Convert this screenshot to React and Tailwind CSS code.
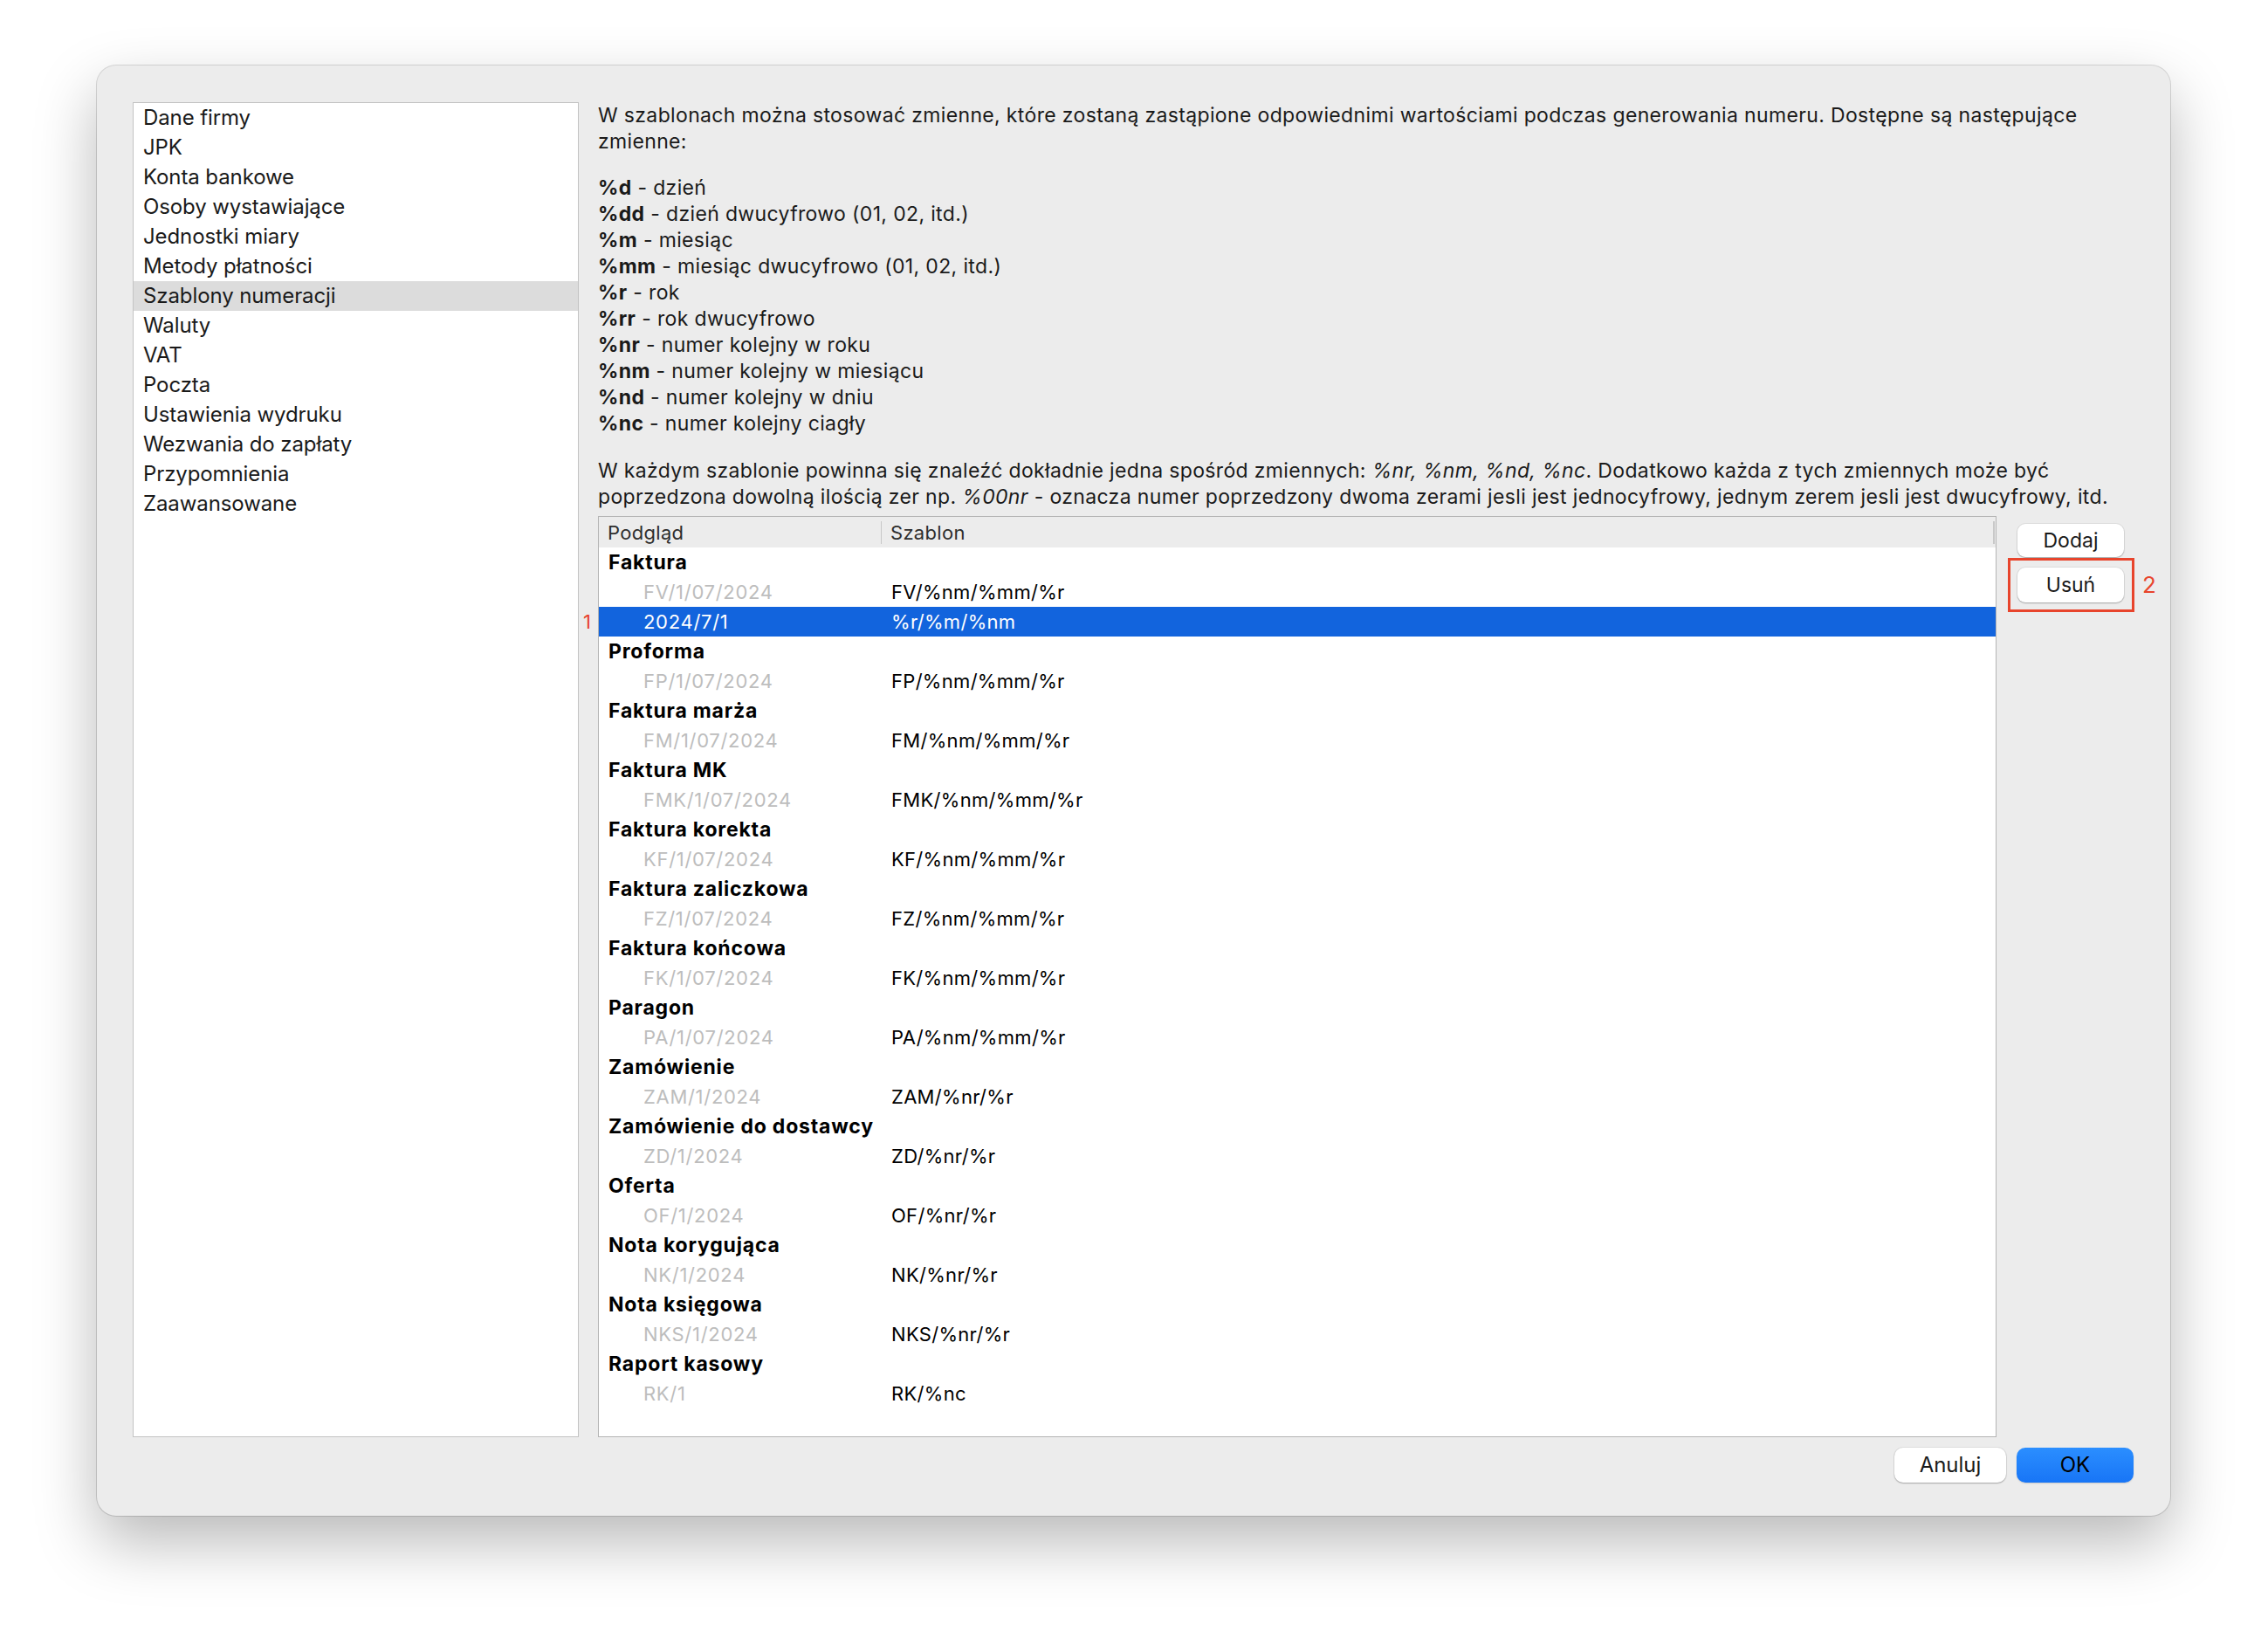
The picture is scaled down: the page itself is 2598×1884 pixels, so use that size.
import React from "react";

const categories = [
  "Dane firmy",
  "JPK",
  "Konta bankowe",
  "Osoby wystawiające",
  "Jednostki miary",
  "Metody płatności",
  "Szablony numeracji",
  "Waluty",
  "VAT",
  "Poczta",
  "Ustawienia wydruku",
  "Wezwania do zapłaty",
  "Przypomnienia",
  "Zaawansowane",
];

const variables = [
  ["%d", "dzień"],
  ["%dd", "dzień dwucyfrowo (01, 02, itd.)"],
  ["%m", "miesiąc"],
  ["%mm", "miesiąc dwucyfrowo (01, 02, itd.)"],
  ["%r", "rok"],
  ["%rr", "rok dwucyfrowo"],
  ["%nr", "numer kolejny w roku"],
  ["%nm", "numer kolejny w miesiącu"],
  ["%nd", "numer kolejny w dniu"],
  ["%nc", "numer kolejny ciagły"],
];

// grupy dokumentów z szablonami
const groups = [
  { name: "Faktura", items: [["FV/1/07/2024", "FV/%nm/%mm/%r"], ["2024/7/1", "%r/%m/%nm", true]] },
  { name: "Proforma", items: [["FP/1/07/2024", "FP/%nm/%mm/%r"]] },
  { name: "Faktura marża", items: [["FM/1/07/2024", "FM/%nm/%mm/%r"]] },
  { name: "Faktura MK", items: [["FMK/1/07/2024", "FMK/%nm/%mm/%r"]] },
  { name: "Faktura korekta", items: [["KF/1/07/2024", "KF/%nm/%mm/%r"]] },
  { name: "Faktura zaliczkowa", items: [["FZ/1/07/2024", "FZ/%nm/%mm/%r"]] },
  { name: "Faktura końcowa", items: [["FK/1/07/2024", "FK/%nm/%mm/%r"]] },
  { name: "Paragon", items: [["PA/1/07/2024", "PA/%nm/%mm/%r"]] },
  { name: "Zamówienie", items: [["ZAM/1/2024", "ZAM/%nr/%r"]] },
  { name: "Zamówienie do dostawcy", items: [["ZD/1/2024", "ZD/%nr/%r"]] },
  { name: "Oferta", items: [["OF/1/2024", "OF/%nr/%r"]] },
  { name: "Nota korygująca", items: [["NK/1/2024", "NK/%nr/%r"]] },
  { name: "Nota księgowa", items: [["NKS/1/2024", "NKS/%nr/%r"]] },
  { name: "Raport kasowy", items: [["RK/1", "RK/%nc"]] },
];

const MacButton = ({ children, className = "" }) => (
  <button
    className={`h-[38px] rounded-[9px] bg-white text-[23px] text-[#1a1a1a] shadow-[0_1px_1.5px_rgba(0,0,0,0.25),0_0_0_1px_rgba(0,0,0,0.06)] ${className}`}
  >
    {children}
  </button>
);

const App = () => {
  return (
    <div
      className="min-h-screen bg-white pt-[75px] pl-[111px]"
      style={{ fontFamily: "Inter, 'Noto Sans', sans-serif" }}
    >
      <div className="w-[2375px] h-[1661px] rounded-[22px] bg-[#ececec] pt-[42px] pl-[41px] pr-[42px] shadow-[0_30px_70px_rgba(0,0,0,0.28),0_0_0_1px_rgba(0,0,0,0.14)] flex flex-col">
        <div className="flex h-[1529px] gap-[22px]">
          {/* Lista kategorii */}
          <div className="w-[511px] shrink-0 bg-white border border-[#c3c3c3]">
            {categories.map((c) => (
              <div
                key={c}
                className={`h-[34px] flex items-center pl-[11px] text-[24px] tracking-[-0.1px] text-[#1a1a1a] ${
                  c === "Szablony numeracji" ? "bg-[#dcdcdc]" : ""
                }`}
              >
                {c}
              </div>
            ))}
          </div>

          {/* Prawa kolumna */}
          <div className="flex-1 flex flex-col text-[23px] tracking-[0.35px] leading-[30px] text-[#1a1a1a]">
            <p>
              W szablonach można stosować zmienne, które zostaną zastąpione odpowiednimi wartościami podczas generowania numeru. Dostępne są następujące
              <br />
              zmienne:
            </p>

            <div className="mt-[23px]">
              {variables.map(([v, d]) => (
                <div key={v}>
                  <span className="font-bold">{v}</span> - {d}
                </div>
              ))}
            </div>

            <p className="mt-[24px]">
              W każdym szablonie powinna się znaleźć dokładnie jedna spośród zmiennych: <i>%nr, %nm, %nd, %nc</i>. Dodatkowo każda z tych zmiennych może być
              <br />
              poprzedzona dowolną ilością zer np. <i>%00nr</i> - oznacza numer poprzedzony dwoma zerami jesli jest jednocyfrowy, jednym zerem jesli jest dwucyfrowy, itd.
            </p>

            <div className="mt-[7px] flex flex-1 gap-[24px]">
              {/* Tabela szablonów */}
              <div className="w-[1602px] shrink-0 border border-[#b4b4b4] bg-white flex flex-col text-[22px] tracking-[0.3px]">
                <div className="h-[35px] bg-[#ececec] flex items-center text-[#2e2e2e]">
                  <div className="w-[323px] pl-[10px]">Podgląd</div>
                  <div className="w-px h-[26px] bg-[#c8c8c8]" />
                  <div className="flex-1 pl-[10px]">Szablon</div>
                  <div className="w-[2px] h-[26px] bg-[#c8c8c8] mr-[1px]" />
                </div>
                {groups.map((g) => (
                  <React.Fragment key={g.name}>
                    <div className="h-[34px] flex items-center pl-[11px] text-[23px] tracking-[0.8px] font-bold text-black">
                      {g.name}
                    </div>
                    {g.items.map(([preview, tpl, selected]) => (
                      <div
                        key={tpl}
                        className={`relative h-[34px] flex items-center ${
                          selected ? "bg-[#1264dd] text-white" : ""
                        }`}
                      >
                        {selected && (
                          <span className="absolute left-[-18px] text-[#e8442c] text-[22px]">1</span>
                        )}
                        <div
                          className={`w-[324px] pl-[51px] tracking-[0.7px] ${
                            selected ? "text-white" : "text-[#bdbdbd]"
                          }`}
                        >
                          {preview}
                        </div>
                        <div className={`flex-1 pl-[11px] ${selected ? "text-white" : "text-black"}`}>
                          {tpl}
                        </div>
                      </div>
                    ))}
                  </React.Fragment>
                ))}
              </div>

              {/* Przyciski */}
              <div className="w-[134px] pt-[9px] flex flex-col gap-[12px] tracking-normal">
                <MacButton className="w-[122px]">Dodaj</MacButton>
                <div className="relative">
                  <MacButton className="w-[122px] h-[40px]">Usuń</MacButton>
                  <div className="absolute left-[-11px] top-[-11px] w-[145px] h-[62px] border-[3.5px] border-[#e8442c]" />
                  <span className="absolute left-[143px] top-[5px] text-[26px] text-[#e8442c]">2</span>
                </div>
              </div>
            </div>
          </div>
        </div>

        {/* Dolne przyciski */}
        <div className="mt-[12px] flex justify-end gap-[12px]">
          <button className="w-[128px] h-[40px] rounded-[10px] bg-white text-[24px] text-[#1a1a1a] shadow-[0_1px_1.5px_rgba(0,0,0,0.25),0_0_0_1px_rgba(0,0,0,0.06)]">
            Anuluj
          </button>
          <button className="w-[134px] h-[40px] rounded-[10px] bg-gradient-to-b from-[#2b8eff] to-[#1875f6] text-[24px] text-black shadow-[0_1px_1.5px_rgba(0,0,0,0.15)]">
            OK
          </button>
        </div>
      </div>
    </div>
  );
};

export default App;
